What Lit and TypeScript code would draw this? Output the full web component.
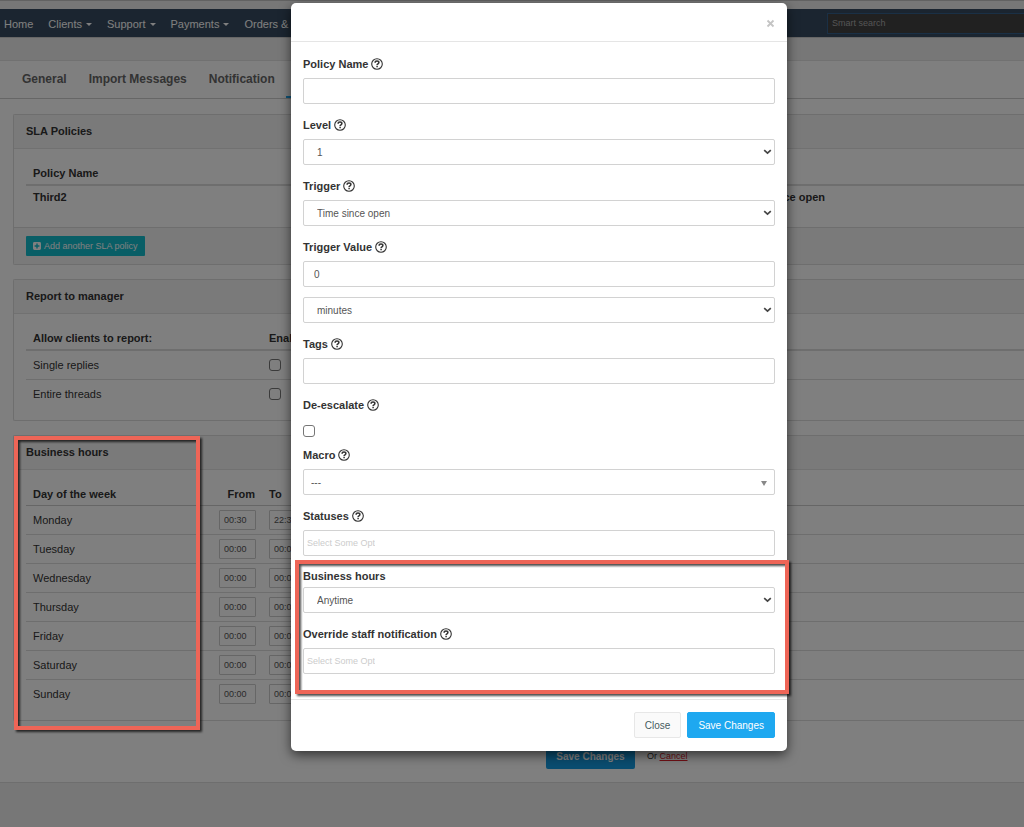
import { LitElement, html, css, nothing } from "lit";
import { customElement } from "lit/decorators.js";

const DAYS: Array<[string, string, string]> = [
  ["Monday", "00:30", "22:30"],
  ["Tuesday", "00:00", "00:00"],
  ["Wednesday", "00:00", "00:00"],
  ["Thursday", "00:00", "00:00"],
  ["Friday", "00:00", "00:00"],
  ["Saturday", "00:00", "00:00"],
  ["Sunday", "00:00", "00:00"],
];

const MENU: Array<[string, boolean]> = [
  ["Home", false],
  ["Clients", true],
  ["Support", true],
  ["Payments", true],
  ["Orders &", true],
];

const TABS = ["General", "Import Messages", "Notification", "SLA"];

const baseStyles = css`
  * {
    box-sizing: border-box;
  }
  button,
  input,
  select {
    font-family: inherit;
    margin: 0;
  }
  input[type="checkbox"] {
    appearance: none;
    display: block;
    width: 12px;
    height: 12px;
    border: 1px solid #767676;
    border-radius: 3px;
    background: #fff;
  }
`;

@customElement("settings-page")
export class SettingsPage extends LitElement {
  static styles = [
    baseStyles,
    css`
      :host {
        display: block;
        background: #eee;
        min-height: 100vh;
        font-size: 11px;
        line-height: 16px;
        color: #333;
      }
      .topline {
        height: 9px;
        border-top: 1px solid #c4c4c4;
      }
      .nav {
        display: flex;
        align-items: center;
        height: 28px;
        padding-left: 4px;
        background: #374b60;
      }
      .menu {
        display: flex;
        gap: 15px;
        flex: 1;
        padding-top: 2px;
        white-space: nowrap;
      }
      .menu a {
        display: flex;
        align-items: center;
        gap: 4px;
        color: #fff;
        text-decoration: none;
      }
      .caret {
        border: 3px solid transparent;
        border-top-color: #fff;
        border-bottom: 0;
      }
      .search {
        width: 197px;
        height: 21px;
        padding: 0 4px;
        font-size: 9px;
        color: #fff;
        background: #424242;
        border: 1px solid #35608c;
        border-right: 0;
        border-radius: 0;
      }
      .search::placeholder {
        color: #aaa;
      }
      .strip {
        height: 24px;
        border-top: 1px solid #ccc;
        border-bottom: 1px solid #e2e2e2;
      }
      .tabs {
        display: flex;
        height: 38px;
        padding-left: 11px;
        background: #fff;
        border-bottom: 1px solid #ccc;
      }
      .tabs a {
        padding: 0 11px;
        line-height: 37px;
        font-size: 12px;
        font-weight: bold;
        color: #666;
        text-decoration: none;
      }
      .tabs a.active {
        border-bottom: 2px solid #1ea8f0;
      }
      .content {
        padding: 15px 0 13px 13px;
        background: #fff;
        border-bottom: 1px solid #ddd;
      }
      .panel {
        margin-bottom: 14px;
        border: 1px solid #ddd;
        border-right: 0;
        border-radius: 2px 0 0 2px;
      }
      .panel h2 {
        margin: 0;
        padding: 0 12px;
        font-size: 11px;
        line-height: 33px;
        background: #f4f4f4;
        border-bottom: 1px solid #e2e2e2;
      }
      .body {
        padding: 12px 0 12px 12px;
      }
      .body.roomy {
        padding-bottom: 19px;
      }
      .foot {
        display: flex;
        padding: 8px 12px;
        background: #f4f4f4;
        border-top: 1px solid #ddd;
      }
      .add {
        display: flex;
        align-items: center;
        gap: 3px;
        height: 20px;
        padding: 0 7px;
        font-size: 9px;
        color: #fff;
        background: #12bccd;
        border: 0;
        border-radius: 1px;
      }
      table {
        width: 100%;
        table-layout: fixed;
        border-collapse: separate;
        border-spacing: 0;
      }
      th {
        height: 25px;
        padding: 0 7px;
        text-align: left;
        border-bottom: 2px solid #ddd;
      }
      .hours th {
        height: 24px;
        border-bottom: 1px solid #ccc;
      }
      th.from {
        text-align: right;
      }
      td {
        height: 29px;
        padding: 0 7px;
        border-bottom: 1px solid #ddd;
      }
      tr:last-child td {
        height: 28px;
        border-bottom: 0;
      }
      .policies tr:last-child td {
        height: 22px;
        font-weight: bold;
      }
      .c-policy {
        width: 706px;
      }
      .c-report {
        width: 236px;
      }
      .c-day {
        width: 186px;
      }
      .c-time {
        width: 50px;
      }
      .c-time-wide {
        width: 60px;
      }
      .time {
        display: block;
        width: 37px;
        height: 20px;
        padding: 0 4px;
        font-size: 9px;
        color: #555;
        border: 1px solid #ccc;
        border-radius: 1px;
        background: #fff;
      }
      .actions {
        display: flex;
        align-items: center;
        gap: 12px;
        padding: 8px 0 0 533px;
        font-size: 9px;
      }
      .save {
        height: 26px;
        width: 89px;
        padding: 0;
        font-size: 10px;
        font-weight: bold;
        color: #fff;
        background: #149be0;
        border: 0;
        border-radius: 2px;
      }
      .actions a {
        color: #e0202c;
      }
    `,
  ];

  render() {
    return html`
      <div class="topline"></div>
      <header class="nav">
        <nav class="menu">
          ${MENU.map(
            ([name, drop]) => html`<a href="#">${name}${drop ? html`<span class="caret"></span>` : nothing}</a>`
          )}
        </nav>
        <input class="search" type="text" placeholder="Smart search" aria-label="Smart search" />
      </header>
      <div class="strip"></div>
      <nav class="tabs">
        ${TABS.map((t, i) => html`<a href="#" class=${i === 3 ? "active" : ""}>${t}</a>`)}
      </nav>
      <main class="content">
        <section class="panel">
          <h2>SLA Policies</h2>
          <div class="body roomy">
            <table class="policies">
              <colgroup><col class="c-policy" /><col /></colgroup>
              <thead><tr><th>Policy Name</th><th></th></tr></thead>
              <tbody><tr><td>Third2</td><td>Time since open</td></tr></tbody>
            </table>
          </div>
          <div class="foot">
            <button class="add" type="button">
              <svg width="8" height="8" viewBox="0 0 8 8" aria-hidden="true">
                <path fill="#fff" fill-rule="evenodd" d="M1.4 0h5.2A1.4 1.4 0 0 1 8 1.4v5.2A1.4 1.4 0 0 1 6.6 8H1.4A1.4 1.4 0 0 1 0 6.600V1.400A1.400 1.400 0 0 1 1.400 0ZM3.300 1.600v1.700H1.600v1.400h1.700v1.700h1.400V4.700h1.700V3.300H4.700V1.600Z" />
              </svg>
              Add another SLA policy
            </button>
          </div>
        </section>

        <section class="panel">
          <h2>Report to manager</h2>
          <div class="body">
            <table>
              <colgroup><col class="c-report" /><col /></colgroup>
              <thead><tr><th>Allow clients to report:</th><th>Enabled</th></tr></thead>
              <tbody>
                ${["Single replies", "Entire threads"].map(
                  (r, i) => html`<tr>
                    <td><label for="r${i}">${r}</label></td>
                    <td><input id="r${i}" type="checkbox" /></td>
                  </tr>`
                )}
              </tbody>
            </table>
          </div>
        </section>

        <section class="panel">
          <h2>Business hours</h2>
          <div class="body">
            <table class="hours">
              <colgroup>
                <col class="c-day" /><col class="c-time" /><col class="c-time-wide" /><col />
              </colgroup>
              <thead>
                <tr><th>Day of the week</th><th class="from">From</th><th>To</th><th></th></tr>
              </thead>
              <tbody>
                ${DAYS.map(
                  ([day, from, to]) => html`<tr>
                    <td>${day}</td>
                    <td><input class="time" type="text" .value=${from} aria-label="${day} from" /></td>
                    <td><input class="time" type="text" .value=${to} aria-label="${day} to" /></td>
                    <td></td>
                  </tr>`
                )}
              </tbody>
            </table>
          </div>
        </section>

        <div class="actions">
          <button class="save" type="button">Save Changes</button>
          <span>Or <a href="#">Cancel</a></span>
        </div>
      </main>
    `;
  }
}

@customElement("policy-dialog")
export class PolicyDialog extends LitElement {
  static styles = [
    baseStyles,
    css`
      :host {
        display: block;
        width: 100%;
        max-width: 496px;
        background: #fff;
        border-radius: 5px;
        box-shadow: 0 4px 12px rgba(0, 0, 0, 0.6);
        font-size: 11px;
        color: #333;
      }
      .head {
        display: flex;
        align-items: center;
        justify-content: flex-end;
        height: 39px;
        padding: 2px 12px 0;
        border-bottom: 1px solid #e5e5e5;
      }
      .close {
        display: flex;
        padding: 0;
        border: 0;
        background: none;
      }
      .body {
        padding: 13px 12px;
      }
      .group {
        margin-bottom: 12px;
      }
      .label {
        display: flex;
        align-items: center;
        gap: 3px;
        height: 17px;
        margin-bottom: 6px;
        font-weight: bold;
      }
      .tight .label {
        margin-bottom: 3px;
      }
      .check .label {
        margin-bottom: 12px;
      }
      .check {
        margin-bottom: 9px;
      }
      .statuses {
        margin-bottom: 11px;
      }
      .field {
        display: block;
        width: 100%;
        height: 26px;
        padding: 0 10px;
        font-size: 10px;
        color: #555;
        background: #fff;
        border: 1px solid #d2d2d2;
        border-radius: 2px;
      }
      .field + .wrap {
        margin-top: 10px;
      }
      .wrap {
        position: relative;
      }
      .wrap svg {
        position: absolute;
        right: 3px;
        top: 10px;
        pointer-events: none;
      }
      .wrap.small svg {
        right: 8px;
        top: 12px;
      }
      select.field {
        appearance: none;
        padding: 0 13px;
      }
      .small select.field {
        padding: 0 7px;
      }
      .chosen {
        display: flex;
        padding: 0 3px;
      }
      .chosen input {
        width: 68px;
        padding: 0;
        border: 0;
        outline: 0;
        background: none;
        font-size: 9px;
      }
      .chosen input::placeholder {
        color: #ccc;
      }
      .foot {
        display: flex;
        justify-content: flex-end;
        gap: 6px;
        padding: 12px 12px 13px;
        border-top: 1px solid #e5e5e5;
      }
      .btn {
        height: 26px;
        padding: 0 10px;
        font-size: 10px;
        color: #465a60;
        background: #fafafa;
        border: 1px solid #e7e7e7;
        border-radius: 2px;
      }
      .primary {
        color: #fff;
        background: #1ea8f0;
        border-color: #1ea8f0;
      }
    `,
  ];

  private help() {
    return html`<svg width="12" height="12" viewBox="0 0 12 12" fill="none" stroke="#333" aria-hidden="true">
      <circle cx="6" cy="6" r="5.300" stroke-width="1.100" />
      <path d="M4.100 4.700C4.100 3.500 5 3 6 3s1.900.5 1.900 1.600c0 1.200-1.800 1.200-1.800 2.400" stroke-width="1.500" />
      <path d="M6.100 7.800v1.500" stroke-width="1.500" />
    </svg>`;
  }

  private label(id: string, text: string, help = true) {
    return html`<label class="label" for=${id}>${text}${help ? this.help() : nothing}</label>`;
  }

  private select(id: string, value: string, name = "") {
    return html`<div class="wrap">
      <select class="field" id=${id} aria-label=${name || nothing}><option>${value}</option></select>
      <svg width="9" height="6" viewBox="0 0 9 6" fill="none" aria-hidden="true">
        <path d="M1.200 1.200 4.500 4.200 7.800 1.200" stroke="#444" stroke-width="1.700" />
      </svg>
    </div>`;
  }

  private chosen(id: string) {
    return html`<div class="field chosen"><input id=${id} type="text" placeholder="Select Some Options" /></div>`;
  }

  render() {
    return html`
      <div class="head">
        <button class="close" type="button" aria-label="Close dialog">
          <svg width="9" height="9" viewBox="0 0 9 9" aria-hidden="true">
            <path d="M1.500 1.500l6 6M7.500 1.500l-6 6" stroke="#c4c4c4" stroke-width="1.800" />
          </svg>
        </button>
      </div>
      <div class="body">
        <div class="group">${this.label("name", "Policy Name")}<input class="field" id="name" type="text" /></div>
        <div class="group">${this.label("level", "Level")}${this.select("level", "1")}</div>
        <div class="group">${this.label("trigger", "Trigger")}${this.select("trigger", "Time since open")}</div>
        <div class="group">
          ${this.label("value", "Trigger Value")}<input class="field" id="value" type="text" .value=${"0"} />
          ${this.select("unit", "minutes", "Trigger unit")}
        </div>
        <div class="group">${this.label("tags", "Tags")}<input class="field" id="tags" type="text" /></div>
        <div class="group check">${this.label("deesc", "De-escalate")}<input id="deesc" type="checkbox" /></div>
        <div class="group">
          ${this.label("macro", "Macro")}
          <div class="wrap small">
            <select class="field" id="macro"><option>---</option></select>
            <svg width="6" height="5" viewBox="0 0 6 5" aria-hidden="true"><path d="M0 0h6L3 5Z" fill="#888" /></svg>
          </div>
        </div>
        <div class="group statuses">${this.label("statuses", "Statuses")}${this.chosen("statuses")}</div>
        <div class="group tight">${this.label("hours", "Business hours", false)}${this.select("hours", "Anytime")}</div>
        <div class="group">${this.label("override", "Override staff notification")}${this.chosen("override")}</div>
      </div>
      <div class="foot">
        <button class="btn" type="button">Close</button>
        <button class="btn primary" type="button">Save Changes</button>
      </div>
    `;
  }
}

@customElement("app-root")
export class AppRoot extends LitElement {
  static styles = css`
    :host {
      display: block;
      position: relative;
      overflow: hidden;
      font-family: "Liberation Sans", Arial, Helvetica, sans-serif;
    }
    .overlay {
      position: absolute;
      inset: 0;
      display: flex;
      justify-content: center;
      align-items: flex-start;
      padding: 3px 0 0 54px;
      background: rgba(0, 0, 0, 0.5);
    }
    .mark {
      position: absolute;
      box-sizing: border-box;
      border: 4px solid #ee6557;
      filter: drop-shadow(2px 2px 1px rgba(0, 0, 0, 0.7));
      pointer-events: none;
    }
    .mark-days {
      left: 14px;
      top: 436px;
      width: 186px;
      height: 294px;
    }
    .frame {
      position: relative;
      display: flex;
      flex: 0 1 496px;
    }
    .mark-fields {
      left: 4px;
      right: -2px;
      top: 557px;
      height: 134px;
    }
  `;

  render() {
    return html`
      <settings-page></settings-page>
      <div class="overlay">
        <div class="frame">
          <policy-dialog role="dialog" aria-label="SLA policy"></policy-dialog>
          <div class="mark mark-fields"></div>
        </div>
      </div>
      <div class="mark mark-days"></div>
    `;
  }
}
